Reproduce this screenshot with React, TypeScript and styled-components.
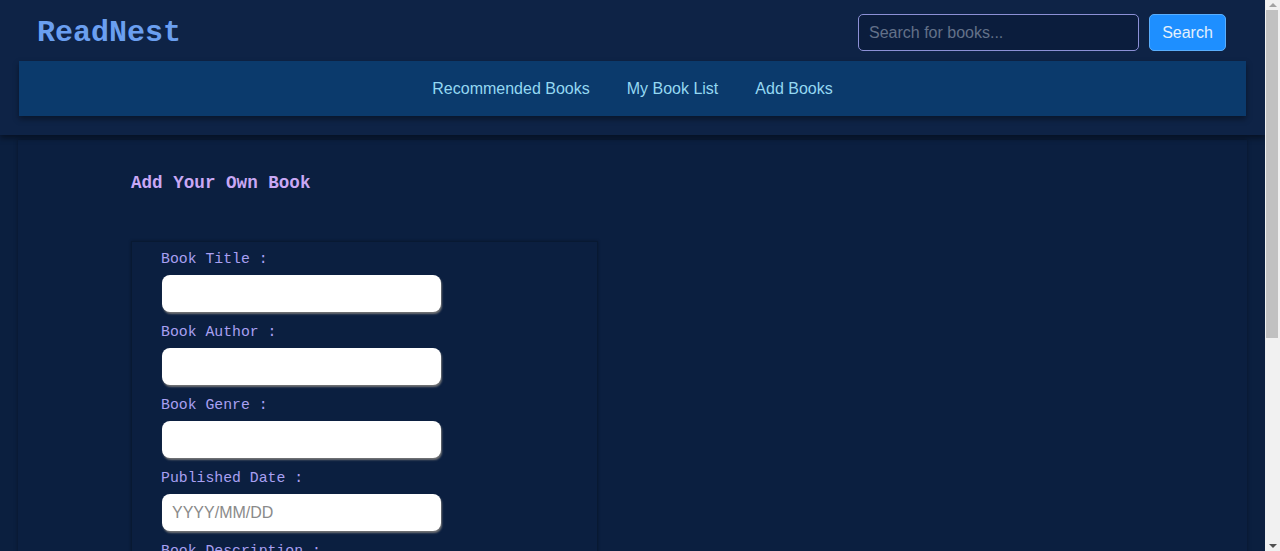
import React from "react";
import styled, { createGlobalStyle } from "styled-components";

const GlobalStyle = createGlobalStyle`
  html, body {
    margin: 0;
    padding: 0;
    background: #0b1f3f;
    overflow: hidden;
  }
  body {
    font-family: "Liberation Sans", Arial, sans-serif;
  }
  * { box-sizing: border-box; }
`;

const Shell = styled.div`
  display: flex;
  height: 100vh;
`;

const Page = styled.div`
  flex: 1;
  min-width: 0;
  overflow: hidden;
  background: #0b1f3f;
`;

const ScrollRail = styled.div`
  width: 15px;
  flex: none;
  display: flex;
  flex-direction: column;
  background: #f1f1f1;
`;

const Arrow = styled.div<{ $down?: boolean }>`
  height: 10px;
  display: flex;
  align-items: center;
  justify-content: center;
  &::before {
    content: "";
    width: 0;
    height: 0;
    border-left: 4px solid transparent;
    border-right: 4px solid transparent;
    ${(p) =>
      p.$down
        ? "border-top: 4px solid #505050;"
        : "border-bottom: 4px solid #a3a3a3;"}
  }
`;

const Track = styled.div`
  flex: 1;
  padding: 0 2px 0 1px;
`;

const Thumb = styled.div`
  height: 328px;
  background: #c1c1c1;
`;

const Header = styled.header`
  background: #0e2346;
  padding: 14px 19px 19px;
  box-shadow: 0 3px 6px rgba(0, 0, 0, 0.45);
  position: relative;
  z-index: 1;
`;

const TopRow = styled.div`
  display: flex;
  align-items: center;
  justify-content: space-between;
  height: 37px;
  padding: 0 20px 0 18px;
`;

const Logo = styled.h1`
  margin: 0;
  font-family: "Liberation Mono", "Courier New", monospace;
  font-size: 30px;
  font-weight: 700;
  color: #6a9ff0;
  line-height: 1;
`;

const SearchForm = styled.form`
  display: flex;
  gap: 10px;
  height: 37px;
`;

const SearchInput = styled.input`
  width: 281px;
  height: 37px;
  padding: 0 10px;
  background: #0b1d3d;
  border: 1px solid #8c90d6;
  border-radius: 5px;
  color: #e0e6f0;
  font-family: "Liberation Sans", Arial, sans-serif;
  font-size: 16px;
  outline: none;
  &::placeholder { color: #637189; }
`;

const SearchButton = styled.button`
  width: 77px;
  height: 37px;
  background: #1e8fff;
  border: 1px solid #5aaefc;
  border-radius: 5px;
  color: #e4f0fc;
  font-family: "Liberation Sans", Arial, sans-serif;
  font-size: 16px;
  cursor: pointer;
`;

const NavBar = styled.nav`
  margin-top: 10px;
  height: 55px;
  background: #0b3a6c;
  display: flex;
  align-items: center;
  justify-content: center;
  gap: 37px;
  box-shadow: 0 3px 6px rgba(0, 0, 0, 0.4);
`;

const NavLink = styled.a`
  color: #94d8f2;
  font-size: 16px;
  text-decoration: none;
  cursor: pointer;
`;

const Main = styled.main`
  margin: 5px 18px 0;
  min-height: 720px;
  padding: 33px 113px 40px;
  background: #0b1f40;
  box-shadow: 0 0 4px rgba(0, 0, 0, 0.35);
`;

const Title = styled.h2`
  margin: 0 0 48px;
  font-family: "Liberation Mono", "Courier New", monospace;
  font-size: 17.6px;
  font-weight: 700;
  line-height: 20px;
  color: #c9a8f5;
`;

const FormBox = styled.form`
  width: 467px;
  padding: 9px 29px 30px;
  border: 1px solid #081932;
  box-shadow: 0 0 3px rgba(0, 0, 0, 0.3);
  display: flex;
  flex-direction: column;
`;

const Field = styled.div`
  display: flex;
  flex-direction: column;
  align-items: flex-start;
  margin-bottom: 12px;
`;

const Label = styled.label`
  font-family: "Liberation Mono", "Courier New", monospace;
  font-size: 14.8px;
  line-height: 17px;
  color: #a9a0f2;
  margin-bottom: 7px;
`;

const TextInput = styled.input`
  margin-left: 1px;
  width: 279px;
  height: 37px;
  padding: 0 10px;
  border: none;
  border-radius: 8px;
  background: #ffffff;
  box-shadow: 1px 2px 2px rgba(120, 120, 120, 0.95);
  font-family: "Liberation Sans", Arial, sans-serif;
  font-size: 16px;
  color: #222;
  outline: none;
  &::placeholder { color: #8a8a8a; }
`;

const TextArea = styled.textarea`
  margin-left: 1px;
  width: 279px;
  height: 90px;
  padding: 8px 10px;
  border: none;
  border-radius: 8px;
  background: #ffffff;
  box-shadow: 1px 2px 2px rgba(120, 120, 120, 0.95);
  font-family: "Liberation Sans", Arial, sans-serif;
  font-size: 16px;
  resize: none;
  outline: none;
`;

const SubmitButton = styled.button`
  align-self: flex-start;
  margin-top: 8px;
  padding: 9px 20px;
  background: #1e8fff;
  border: 1px solid #5aaefc;
  border-radius: 5px;
  color: #eaf4ff;
  font-family: "Liberation Sans", Arial, sans-serif;
  font-size: 16px;
`;

const fields = [
  { label: "Book Title :", placeholder: "" },
  { label: "Book Author :", placeholder: "" },
  { label: "Book Genre :", placeholder: "" },
  { label: "Published Date :", placeholder: "YYYY/MM/DD" },
];

export default function App() {
  return (
    <>
      <GlobalStyle />
      <Shell>
        <Page>
          <Header>
            <TopRow>
              <Logo>ReadNest</Logo>
              <SearchForm onSubmit={(e) => e.preventDefault()}>
                <SearchInput placeholder="Search for books..." />
                <SearchButton type="submit">Search</SearchButton>
              </SearchForm>
            </TopRow>
            <NavBar>
              <NavLink>Recommended Books</NavLink>
              <NavLink>My Book List</NavLink>
              <NavLink>Add Books</NavLink>
            </NavBar>
          </Header>
          <Main>
            <Title>Add Your Own Book</Title>
            <FormBox onSubmit={(e) => e.preventDefault()}>
              {fields.map((f) => (
                <Field key={f.label}>
                  <Label>{f.label}</Label>
                  <TextInput placeholder={f.placeholder} />
                </Field>
              ))}
              <Field>
                <Label>Book Description :</Label>
                <TextArea />
              </Field>
              <SubmitButton type="submit">Add Book</SubmitButton>
            </FormBox>
          </Main>
        </Page>
        <ScrollRail>
          <Arrow />
          <Track>
            <Thumb />
          </Track>
          <Arrow $down />
        </ScrollRail>
      </Shell>
    </>
  );
}
